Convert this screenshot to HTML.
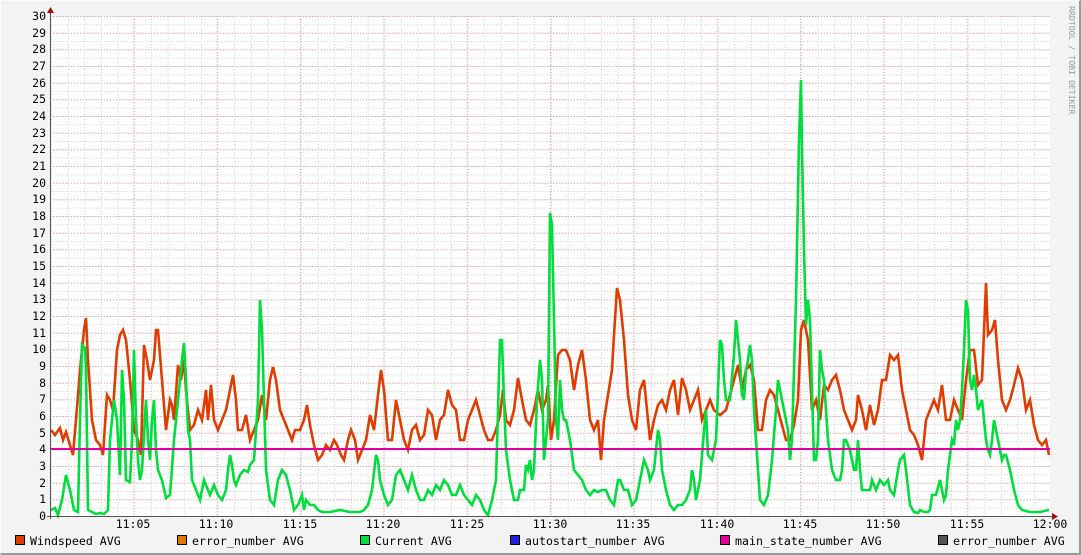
<!DOCTYPE html>
<html><head><meta charset="utf-8"><style>
html,body{margin:0;padding:0}
body{width:1081px;height:555px;background:#f3f3f3;position:relative;overflow:hidden;font-family:"DejaVu Sans Mono","Liberation Mono",monospace;}
.frame{position:absolute;left:0;top:0;border-left:1px solid #fcfcfc;border-top:1px solid #fcfcfc;border-right:2px solid #9a9a9a;border-bottom:2px solid #9a9a9a;box-sizing:border-box;width:1081px;height:555px}
</style></head><body><div class="frame"></div>
<svg width="1081" height="555" style="position:absolute;left:0;top:0" font-family="DejaVu Sans Mono, Liberation Mono, monospace">
<defs>
<pattern id="mn" patternUnits="userSpaceOnUse" x="51" y="16" width="16.667" height="8.333">
<line x1="0.5" y1="0" x2="0.5" y2="8.333" stroke="#c8c8c8" stroke-dasharray="1,2"/>
<line x1="0" y1="0.5" x2="16.667" y2="0.5" stroke="#c8c8c8" stroke-dasharray="1,2"/>
</pattern>
<pattern id="mj" patternUnits="userSpaceOnUse" x="50" y="16" width="83.333" height="16.667">
<line x1="0.5" y1="0" x2="0.5" y2="16.667" stroke="#e49a9a" stroke-dasharray="1,2"/>
<line x1="0" y1="0.5" x2="83.333" y2="0.5" stroke="#e49a9a" stroke-dasharray="1,2"/>
</pattern>
</defs>
<rect x="51" y="16" width="999" height="500" fill="#fff"/>
<rect x="51" y="16" width="999" height="500" fill="url(#mn)"/>
<rect x="51" y="16" width="999" height="500" fill="url(#mj)"/>
<g font-size="11.5" fill="#000" text-anchor="end">
<text x="46" y="520">0</text><text x="46" y="503">1</text><text x="46" y="487">2</text><text x="46" y="470">3</text><text x="46" y="453">4</text><text x="46" y="437">5</text><text x="46" y="420">6</text><text x="46" y="403">7</text><text x="46" y="387">8</text><text x="46" y="370">9</text><text x="46" y="353">10</text><text x="46" y="337">11</text><text x="46" y="320">12</text><text x="46" y="303">13</text><text x="46" y="287">14</text><text x="46" y="270">15</text><text x="46" y="253">16</text><text x="46" y="237">17</text><text x="46" y="220">18</text><text x="46" y="203">19</text><text x="46" y="187">20</text><text x="46" y="170">21</text><text x="46" y="153">22</text><text x="46" y="137">23</text><text x="46" y="120">24</text><text x="46" y="103">25</text><text x="46" y="87">26</text><text x="46" y="70">27</text><text x="46" y="53">28</text><text x="46" y="37">29</text><text x="46" y="20">30</text>
</g>
<g font-size="11.5" fill="#000" text-anchor="middle">
<text x="133" y="528">11:05</text><text x="216" y="528">11:10</text><text x="300" y="528">11:15</text><text x="383" y="528">11:20</text><text x="467" y="528">11:25</text><text x="550" y="528">11:30</text><text x="633" y="528">11:35</text><text x="717" y="528">11:40</text><text x="800" y="528">11:45</text><text x="883" y="528">11:50</text><text x="967" y="528">11:55</text><text x="1050" y="528">12:00</text>
</g>
<polyline fill="none" stroke="#e03c00" stroke-width="2.6" stroke-linejoin="miter" points="51,430 55,435 60,428 63,440 66,432 70,445 73,455 76,420 80,370 84,330 86,318 88,360 92,420 96,440 100,445 103,455 107,395 110,400 113,410 117,350 120,335 123,330 126,340 130,380 134,430 138,440 141,455 144,345 147,360 150,380 154,360 156,330 158,330 162,380 166,430 170,400 172,405 174,420 178,365 181,380 184,360 186,390 190,430 194,425 198,410 202,420 206,390 208,420 211,385 214,420 218,430 222,420 226,410 230,390 233,375 236,400 238,430 242,430 246,415 250,440 254,430 258,420 262,395 266,420 270,380 273,367 276,380 280,410 284,420 288,430 292,440 295,430 300,430 304,420 307,405 310,425 314,445 318,460 322,455 326,445 330,450 334,440 337,445 341,455 344,460 348,440 351,430 355,440 358,460 362,450 366,440 370,415 374,430 378,395 381,370 384,390 388,440 392,440 396,400 400,420 404,440 408,450 412,430 416,425 420,440 424,435 428,410 432,415 436,440 440,420 444,415 448,390 452,405 456,410 460,440 464,440 468,420 472,410 476,400 480,415 484,430 488,440 492,440 496,430 500,415 503,390 506,420 510,425 514,410 518,378 522,400 526,420 530,425 534,410 538,390 542,410 546,400 548,385 551,440 554,420 558,355 562,350 566,350 570,360 574,390 578,365 582,350 586,380 590,420 594,430 598,420 601,460 604,420 608,395 612,370 614,335 617,288 620,300 624,340 628,395 632,420 636,430 640,390 644,380 648,420 650,440 654,420 658,405 662,400 666,410 670,390 674,380 678,415 682,378 686,390 690,410 694,400 698,390 702,420 706,410 710,400 714,410 720,415 726,410 730,395 734,380 738,365 742,390 746,370 750,365 754,380 758,430 762,430 766,400 770,390 774,395 778,410 782,425 786,440 790,440 794,425 798,400 801,330 804,320 808,340 812,410 816,400 820,420 824,385 828,390 832,380 836,375 840,390 844,410 848,420 852,430 856,420 858,395 862,410 866,430 870,405 874,425 878,410 882,380 886,380 890,355 894,360 898,355 902,390 906,410 910,430 914,435 918,445 922,460 926,420 930,410 934,400 938,410 942,385 946,420 950,420 954,400 958,410 962,420 966,380 970,350 974,350 978,385 982,380 986,283 988,335 992,330 995,320 998,360 1002,400 1006,410 1010,400 1014,385 1018,368 1022,380 1026,410 1030,400 1034,425 1038,440 1042,445 1046,440 1049,455"/>
<polyline fill="none" stroke="#00dd3c" stroke-width="2.6" stroke-linejoin="miter" points="51,510 55,508 58,515 62,500 66,475 70,490 74,510 78,512 80,420 82,345 85,348 86,370 88,510 92,512 96,514 100,513 104,514 108,510 110,440 114,400 117,420 120,475 122,370 124,400 126,480 130,482 132,440 134,350 136,420 138,460 140,480 142,470 146,400 148,440 150,460 152,420 154,400 156,450 158,470 162,480 166,498 170,495 174,440 178,400 182,360 184,343 186,380 188,430 190,440 192,480 196,490 200,500 204,480 208,490 210,495 214,485 218,495 222,500 226,490 228,470 230,455 232,465 234,480 236,485 240,475 244,470 248,472 250,465 254,460 256,430 258,400 260,300 262,330 264,400 266,470 270,500 274,505 278,480 282,470 286,475 290,490 294,510 298,505 302,495 304,510 306,500 310,505 314,505 318,510 322,512 330,512 340,510 350,512 360,512 364,510 368,505 372,490 376,455 378,460 380,480 384,495 388,505 392,500 396,475 400,470 404,480 408,490 412,475 416,490 420,500 424,500 428,490 432,495 436,485 440,490 444,480 448,485 452,495 456,495 460,485 464,495 468,500 472,505 476,495 480,500 484,510 488,515 492,500 496,480 500,340 502,340 504,400 506,450 510,480 514,500 518,500 520,490 524,490 526,465 528,470 530,460 532,480 534,470 537,400 540,360 542,380 544,460 546,440 548,420 550,213 552,225 554,320 556,420 558,440 560,380 562,410 564,420 566,420 570,440 574,470 578,475 582,480 586,490 590,495 594,490 598,492 602,490 606,490 610,500 614,505 618,480 620,480 624,490 628,490 632,505 636,500 640,480 644,460 648,470 650,480 654,470 658,430 660,440 662,470 666,490 670,505 674,510 678,505 682,505 686,500 690,490 692,470 694,480 696,500 700,480 704,430 706,410 708,455 712,460 716,440 720,340 722,345 724,380 726,400 730,400 734,355 736,320 738,340 740,360 742,395 744,400 746,370 748,360 750,345 752,360 754,410 756,440 760,500 764,505 768,495 772,460 776,410 778,380 782,400 784,410 788,430 790,460 792,440 796,300 799,140 801,80 802,150 804,250 806,325 808,300 810,320 812,390 814,460 816,460 818,440 820,350 822,370 824,380 826,410 828,440 832,470 836,480 840,480 842,470 844,440 846,440 850,450 854,470 856,470 858,440 860,470 862,490 866,490 870,490 872,480 876,490 880,480 884,485 888,480 890,490 894,495 898,470 900,460 904,455 906,470 910,505 914,512 918,513 920,510 924,512 928,512 930,510 932,495 936,495 940,480 942,490 944,500 946,495 948,470 952,440 954,445 956,420 958,430 960,420 962,390 964,350 966,300 968,310 970,380 972,390 974,375 976,390 978,410 982,400 984,420 986,440 988,450 990,455 992,440 994,420 996,430 998,440 1000,450 1002,460 1004,455 1006,455 1010,470 1014,490 1018,505 1022,510 1030,512 1040,512 1049,510"/>
<line x1="51" y1="449" x2="1050" y2="449" stroke="#e000a0" stroke-width="2"/>
<g stroke="#555" stroke-width="1">
<line x1="50.5" y1="12" x2="50.5" y2="519"/>
<line x1="47" y1="516.5" x2="1054" y2="516.5"/>
</g>
<polygon points="47,13 54,13 50.5,7" fill="#a01010"/>
<polygon points="1052,513 1052,520 1058,516.5" fill="#a01010"/>
<text transform="translate(1069,6) rotate(90)" font-size="8.2" fill="#999">RRDTOOL / TOBI OETIKER</text>
<g stroke="#000" stroke-width="1">
<rect x="15.5" y="535.5" width="9" height="9" fill="#e03c00"/>
<rect x="177.5" y="535.5" width="9" height="9" fill="#e07800"/>
<rect x="360.5" y="535.5" width="9" height="9" fill="#00dd3c"/>
<rect x="510.5" y="535.5" width="9" height="9" fill="#2020e0"/>
<rect x="720.5" y="535.5" width="9" height="9" fill="#e000a0"/>
<rect x="938.5" y="535.5" width="9" height="9" fill="#555"/>
</g>
<g font-size="11.6" fill="#000">
<text x="30" y="545">Windspeed AVG</text>
<text x="192" y="545">error_number AVG</text>
<text x="375" y="545">Current AVG</text>
<text x="525" y="545">autostart_number AVG</text>
<text x="735" y="545">main_state_number AVG</text>
<text x="953" y="545">error_number AVG</text>
</g>
</svg>
</body></html>
